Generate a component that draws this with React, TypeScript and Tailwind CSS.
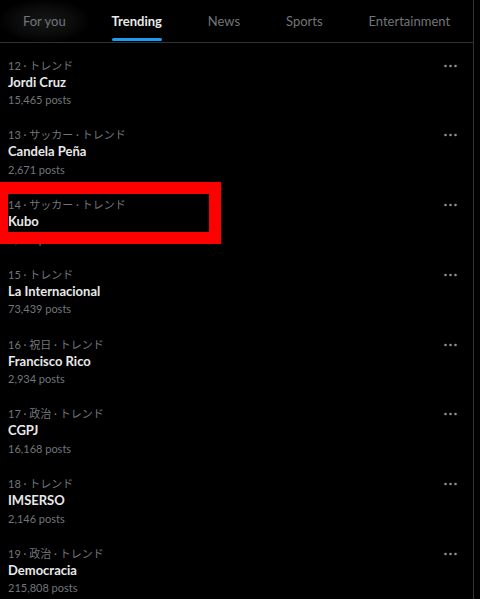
import React from "react";

type Trend = { rank: number; category: string; title: string; posts: string };

const TRENDS: Trend[] = [
  { rank: 12, category: "トレンド", title: "Jordi Cruz", posts: "15,465 posts" },
  { rank: 13, category: "サッカー · トレンド", title: "Candela Peña", posts: "2,671 posts" },
  { rank: 14, category: "サッカー · トレンド", title: "Kubo", posts: "4,218 posts" },
  { rank: 15, category: "トレンド", title: "La Internacional", posts: "73,439 posts" },
  { rank: 16, category: "祝日 · トレンド", title: "Francisco Rico", posts: "2,934 posts" },
  { rank: 17, category: "政治 · トレンド", title: "CGPJ", posts: "16,168 posts" },
  { rank: 18, category: "トレンド", title: "IMSERSO", posts: "2,146 posts" },
  { rank: 19, category: "政治 · トレンド", title: "Democracia", posts: "215,808 posts" },
];

const TABS = ["For you", "Trending", "News", "Sports", "Entertainment"];

// Segoe-ish narrow sans, CJK fallback for the category line.
const FONT = "font-['Lato','Noto_Sans_CJK_JP',sans-serif]";

export default function App() {
  return (
    <div className={`h-[599px] w-[480px] overflow-hidden bg-black ${FONT}`}>
      <div className="relative h-full w-[474px] border-r border-[#2f3336]">
        <TabBar />
        {TRENDS.map((t) => (
          <TrendRow key={t.rank} trend={t} />
        ))}
        {/* annotation box drawn over the Kubo row */}
        <div className="pointer-events-none absolute left-0 top-[182px] h-[62px] w-[221px] border-b-[12px] border-l-[8px] border-r-[12px] border-t-[12px] border-[#ff0000]" />
      </div>
    </div>
  );
}

function TabBar() {
  return (
    <div className="flex h-[43px] border-b border-[#2f3336]">
      {TABS.map((tab) => {
        const active = tab === "Trending";
        return (
          <div
            key={tab}
            className={`relative flex flex-auto items-center justify-center ${
              tab === "For you" ? "bg-[radial-gradient(ellipse_at_center,#161616_0%,#0b0b0b_45%,#000_75%)]" : ""
            }`}
          >
            <div className="relative flex h-full items-center pt-[1px]">
              <span
                className={`text-[13px] leading-none ${
                  active ? "font-bold text-[#e7e9ea]" : "text-[#71767b]"
                }`}
              >
                {tab}
              </span>
              {active && (
                <div className="absolute bottom-[1px] left-0 h-[3px] w-full rounded-full bg-[#1d9bf0]" />
              )}
            </div>
          </div>
        );
      })}
    </div>
  );
}

function TrendRow({ trend }: { trend: Trend }) {
  return (
    <div className="relative h-[69.75px] pl-[8px] pr-[16px] pt-[14.5px]">
      <div className="text-[11px] leading-[16px] text-[#71767b]">
        {trend.rank} · {trend.category}
      </div>
      <div className="text-[13px] font-bold leading-[17.5px] text-[#e7e9ea]">{trend.title}</div>
      <div className="text-[11px] leading-[17.5px] text-[#71767b]">{trend.posts}</div>
      <svg
        className="absolute right-[16px] top-[20.5px]"
        width="13"
        height="4"
        viewBox="0 0 13 4"
        fill="#8b9096"
      >
        <circle cx="1.5" cy="2" r="1.3" />
        <circle cx="6.5" cy="2" r="1.3" />
        <circle cx="11.5" cy="2" r="1.3" />
      </svg>
    </div>
  );
}
